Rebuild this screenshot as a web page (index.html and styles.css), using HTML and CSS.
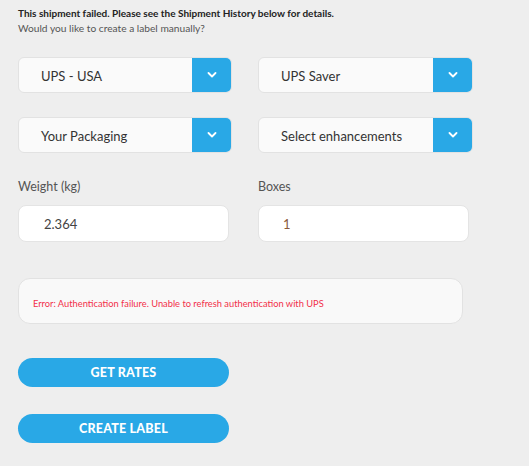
FILE: index.html
```html
<!DOCTYPE html>
<html>
<head>
<meta charset="utf-8">
<link rel="stylesheet" href="styles.css">
</head>
<body>
<div class="page">
  <p class="msg-title">This shipment failed. Please see the Shipment History below for details.</p>
  <p class="msg-sub">Would you like to create a label manually?</p>

  <div class="grid selects">
    <div class="select"><span class="select-text">UPS - USA</span><span class="select-btn"><svg width="10" height="6" viewBox="0 0 10 6"><path d="M1.5 1l3.5 3.5 3.5-3.5" fill="none" stroke="#fff" stroke-width="1.8" stroke-linecap="round" stroke-linejoin="round"/></svg></span></div>
    <div class="select"><span class="select-text">UPS Saver</span><span class="select-btn"><svg width="10" height="6" viewBox="0 0 10 6"><path d="M1.5 1l3.5 3.5 3.5-3.5" fill="none" stroke="#fff" stroke-width="1.8" stroke-linecap="round" stroke-linejoin="round"/></svg></span></div>
    <div class="select"><span class="select-text">Your Packaging</span><span class="select-btn"><svg width="10" height="6" viewBox="0 0 10 6"><path d="M1.5 1l3.5 3.5 3.5-3.5" fill="none" stroke="#fff" stroke-width="1.8" stroke-linecap="round" stroke-linejoin="round"/></svg></span></div>
    <div class="select"><span class="select-text">Select enhancements</span><span class="select-btn"><svg width="10" height="6" viewBox="0 0 10 6"><path d="M1.5 1l3.5 3.5 3.5-3.5" fill="none" stroke="#fff" stroke-width="1.8" stroke-linecap="round" stroke-linejoin="round"/></svg></span></div>
  </div>

  <div class="grid fields">
    <div class="field">
      <label class="label">Weight (kg)</label>
      <div class="input">2.364</div>
    </div>
    <div class="field">
      <label class="label">Boxes</label>
      <div class="input input-boxes">1</div>
    </div>
  </div>

  <div class="error-box">Error: Authentication failure. Unable to refresh authentication with UPS</div>

  <div class="actions">
    <button class="btn">GET RATES</button>
    <button class="btn">CREATE LABEL</button>
  </div>
</div>
</body>
</html>
```

FILE: styles.css
```css
* { box-sizing: border-box; }
html, body {
  margin: 0;
  padding: 0;
  background: #eeeeee;
  font-family: "Lato", "Open Sans", sans-serif;
}
.page {
  padding: 7px 0 0 18px;
  width: 529px;
  height: 466px;
  overflow: hidden;
}
.msg-title {
  margin: 0;
  font-size: 10px;
  font-weight: 700;
  color: #222;
  line-height: 13px;
}
.msg-sub {
  margin: 2px 0 0;
  font-size: 10.2px;
  color: #555;
  line-height: 13px;
}
.grid {
  display: grid;
  grid-template-columns: 214px 215px;
  column-gap: 26px;
}
.selects {
  margin-top: 22px;
  row-gap: 24px;
}
.select {
  display: flex;
  height: 36px;
  background: #fafafa;
  border: 1px solid #e2e2e2;
  border-radius: 6px;
  overflow: hidden;
}
.select-text {
  flex: 1;
  display: flex;
  align-items: center;
  padding: 2px 0 0 22px;
  font-size: 13px;
  color: #333;
}
.select-btn {
  width: 40px;
  background: #29a8e6;
  display: flex;
  align-items: center;
  justify-content: center;
  margin: -1px -1px -1px 0;
}
.fields {
  margin-top: 26px;
}
.field {
  display: flex;
  flex-direction: column;
}
.label {
  font-size: 12.5px;
  color: #555;
  line-height: 16px;
}
.input {
  margin-top: 10px;
  width: 211px;
  height: 37px;
  background: #fff;
  border: 1px solid #e4e4e4;
  border-radius: 8px;
  display: flex;
  align-items: center;
  padding-left: 25px;
  font-size: 13px;
  color: #444;
}
.input-boxes {
  padding-left: 24px;
  color: #8a5a3a;
}
.error-box {
  margin-top: 36px;
  width: 445px;
  height: 46px;
  background: #f9f9f9;
  border: 1px solid #e2e2e2;
  border-radius: 12px;
  display: flex;
  align-items: center;
  padding: 5px 0 0 14px;
  font-size: 9.3px;
  color: #f2304a;
}
.actions {
  margin-top: 34px;
  display: flex;
  flex-direction: column;
  gap: 27px;
}
.btn {
  width: 211px;
  height: 29px;
  border: none;
  border-radius: 15px;
  background: #29a8e6;
  color: #fff;
  font-family: "Lato", sans-serif;
  font-weight: 900;
  font-size: 12.5px;
  letter-spacing: 0.2px;
  padding: 0;
}
```
